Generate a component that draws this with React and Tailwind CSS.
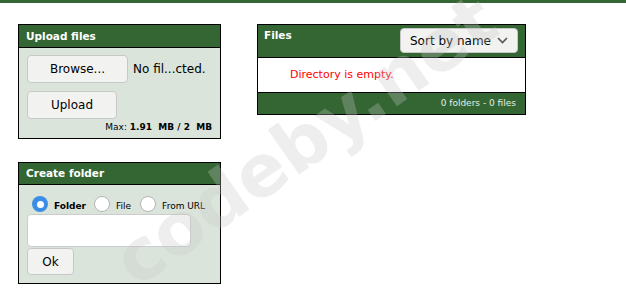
export default function App() {
    return (
        <div className="relative w-[626px] h-[290px] overflow-hidden bg-white font-['DejaVu_Sans',sans-serif]">
            <div className="h-[3px] bg-[#336633]"></div>

            <div className="flex gap-[36px] pl-[18px] pt-[21px]">
                {/* left column */}
                <div className="flex flex-col gap-[23px]">
                    {/* Upload files */}
                    <div className="w-[203px] border border-black bg-[#dbe4db]">
                        <div className="h-[23px] border-b border-black bg-[#336633] px-[7px] text-[10.5px] font-bold leading-[22px] text-white">Upload files</div>
                        <div className="px-[8px] pt-[7px] pb-[4px]">
                            <div className="flex items-center">
                                <button className="h-[28px] w-[101px] rounded-[4px] border border-[#c8c8c8] bg-[#f2f2f0] text-[12px] text-black">Browse...</button>
                                <span className="ml-[5px] text-[12px] text-black">No fil...cted.</span>
                            </div>
                            <button className="mt-[8px] h-[28px] w-[90px] rounded-[4px] border border-[#c8c8c8] bg-[#f2f2f0] text-[12px] text-black">Upload</button>
                            <div className="mt-[1px] text-right text-[9px] leading-[14px] text-black">
                                Max: <b>1.91&nbsp; MB / 2&nbsp; MB</b>
                            </div>
                        </div>
                    </div>

                    {/* Create folder */}
                    <div className="w-[203px] border border-black bg-[#dbe4db]">
                        <div className="h-[22px] border-b border-black bg-[#336633] px-[7px] text-[10.5px] font-bold leading-[21px] text-white">Create folder</div>
                        <div className="px-[8px] pt-[11px] pb-[8px]">
                            <div className="flex h-[16px] items-end text-[9px] leading-[11px] text-black">
                                <span className="ml-[5px] flex h-[16px] w-[16px] items-center justify-center rounded-full bg-[#3b8ee6]">
                                    <span className="h-[7px] w-[7px] rounded-full bg-white"></span>
                                </span>
                                <span className="ml-[6px] font-bold">Folder</span>
                                <span className="ml-[8px] h-[16px] w-[16px] rounded-full border border-[#b5b5b5] bg-white"></span>
                                <span className="ml-[6px]">File</span>
                                <span className="ml-[9px] h-[16px] w-[16px] rounded-full border border-[#b5b5b5] bg-white"></span>
                                <span className="ml-[6px]">From URL</span>
                            </div>
                            <div className="mt-[2px] h-[33px] w-[164px] rounded-[4px] border border-[#cccccc] bg-white"></div>
                            <button className="mt-[1px] h-[27px] w-[47px] rounded-[4px] border border-[#c8c8c8] bg-[#f2f2f0] text-[12px] text-black">Ok</button>
                        </div>
                    </div>
                </div>

                {/* Files */}
                <div className="w-[269px] self-start border border-black">
                    <div className="flex h-[32px] items-start justify-between bg-[#336633] pl-[6px] pr-[7px]">
                        <span className="pt-[3px] text-[10.5px] font-bold text-white">Files</span>
                        <button className="mt-[3px] flex h-[25px] w-[118px] items-center justify-center gap-[6px] rounded-[4px] border border-[#c8c8c8] bg-[#f2f2f0] text-[12px] text-black">
                            Sort by name
                            <svg width="11" height="7" viewBox="0 0 11 7" fill="none" stroke="#555" strokeWidth="1.6">
                                <path d="M1 1l4.5 4.5L10 1" />
                            </svg>
                        </button>
                    </div>
                    <div className="h-[36px] border-y border-black bg-white pl-[32px] text-[11px] leading-[34px] text-[#ff0000]">Directory is empty.</div>
                    <div className="h-[21px] bg-[#336633] pr-[9px] text-right text-[9px] leading-[21px] text-[#e6ece6]">0 folders - 0 files</div>
                </div>
            </div>

            {/* watermark */}
            <div className="pointer-events-none absolute left-[5px] top-[104px] w-[600px] -rotate-[35deg] text-center text-[72px] font-bold leading-none text-[rgba(200,200,200,0.3)]">codeby.net</div>
        </div>
    );
}
